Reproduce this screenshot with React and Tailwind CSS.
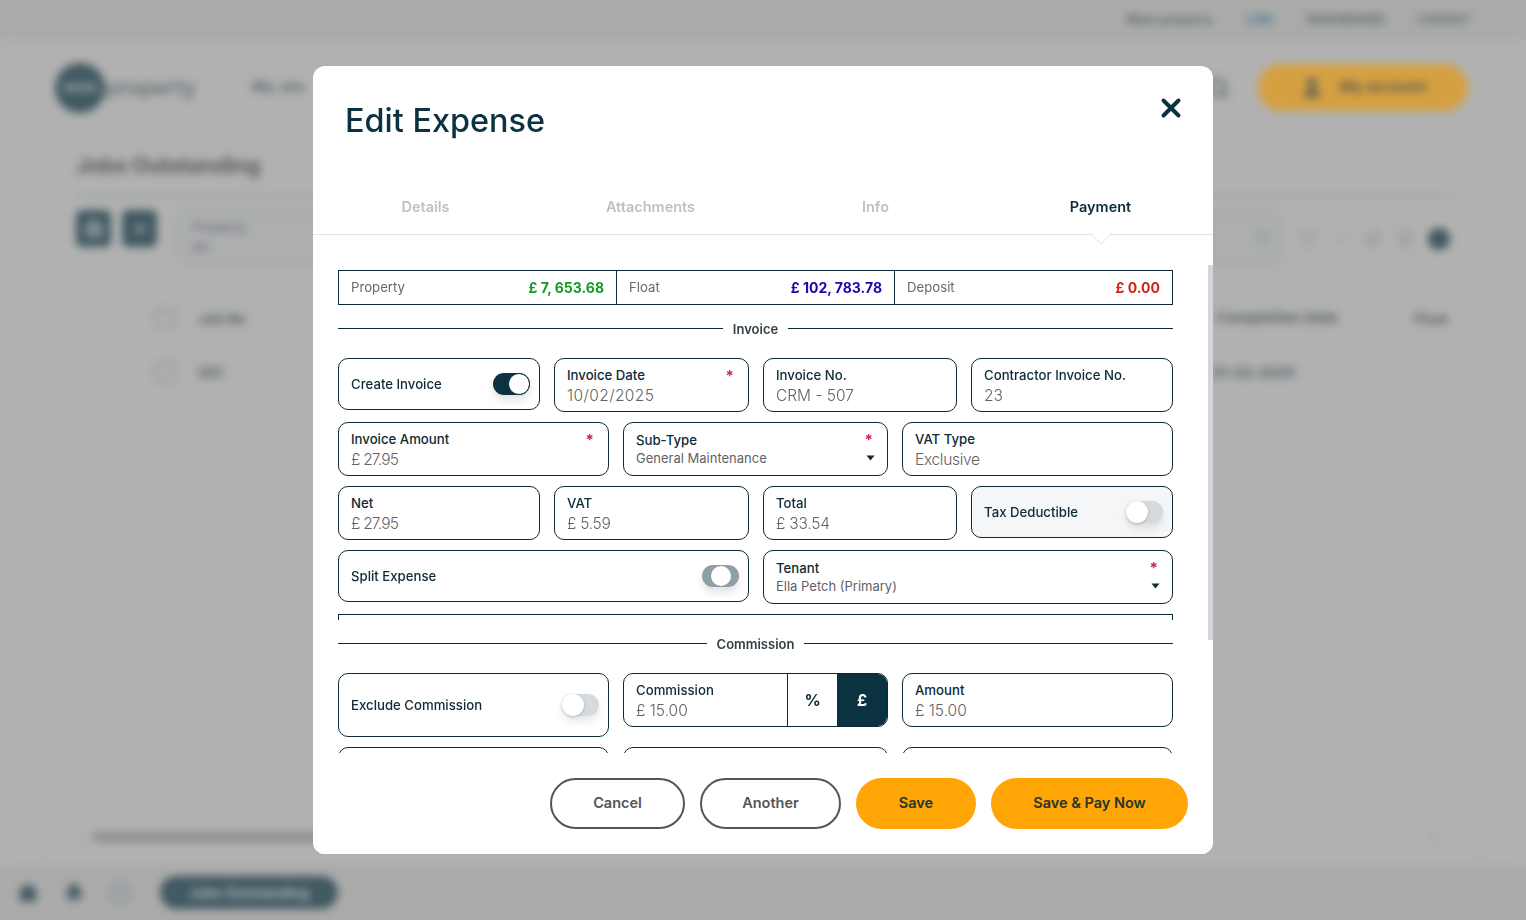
import React from "react";
import { X, Search, Printer, Plus, User, ChevronLeft, ChevronRight, Home, Bell, Settings, Filter, Trash2 } from "lucide-react";

const Toggle = ({ state }) => {
  if (state === "on")
    return (
      <span className="flex h-[22px] w-[37px] items-center justify-end rounded-full bg-[#0a3240] shadow-[0_5px_8px_rgba(0,0,0,0.12)]">
        <span className="h-[22px] w-[22px] rounded-full border border-[#0a3240] bg-white" />
      </span>
    );
  if (state === "mid")
    return (
      <span className="flex h-[22px] w-[37px] items-center justify-center rounded-full bg-[#8f9fa6] shadow-[0_5px_8px_rgba(0,0,0,0.12)]">
        <span className="h-[20px] w-[20px] rounded-full bg-white" />
      </span>
    );
  return (
    <span className="flex h-[22px] w-[37px] items-center justify-start rounded-full bg-[#d5dade] shadow-[0_5px_8px_rgba(0,0,0,0.1)]">
      <span className="h-[22px] w-[22px] rounded-full bg-white shadow-[0_1px_3px_rgba(0,0,0,0.2)]" />
    </span>
  );
};

const ToggleBox = ({ label, state, muted, h = "h-[52px]" }) => (
  <div className={`flex ${h} items-center justify-between rounded-[10px] border border-[#0d2b36] pl-[12px] pr-[9px] ${muted ? "bg-[#f5f6f8]" : "bg-white"}`}>
    <span className="pt-[2px] text-[13.2px] font-medium text-[#0d2b36]">{label}</span>
    <Toggle state={state} />
  </div>
);

const Caret = () => (
  <svg width="9" height="6" viewBox="0 0 9 6" className="block">
    <path d="M0.5 0.5H8.5L4.5 5.5Z" fill="#0d2b36" />
  </svg>
);

const Field = ({ label, value, req, select, track = "" }) => (
  <div className="relative flex h-[54px] flex-col rounded-[10px] border border-[#0d2b36] bg-white pl-[12px] pt-[7px]">
    <span className={`text-[13.2px] font-medium leading-[18px] text-[#0d2b36] ${select ? "mt-[1px]" : ""}`}>{label}</span>
    <span className={select ? "text-[13px] leading-[18px] text-[#5f6368]" : `mt-[2px] text-[15.5px] font-light leading-[20px] text-[#5f6368] ${track}`}>{value}</span>
    {req && <span className="absolute right-[14px] top-[9px] text-[15px] font-bold leading-[15px] text-[#d5264f]">*</span>}
    {select && (
      <span className="absolute right-[12px] top-[32px]">
        <Caret />
      </span>
    )}
  </div>
);

const Divider = ({ label }) => (
  <div className="flex h-[20px] items-center gap-[10px]">
    <span className="h-px flex-1 bg-[#0d2b36]" />
    <span className="pt-[3px] text-[13px] font-semibold text-[#333f45]">{label}</span>
    <span className="h-px flex-1 bg-[#0d2b36]" />
  </div>
);

const Balance = ({ label, value, color, last }) => (
  <div className={`flex items-center justify-between pl-[12px] pr-[12px] ${last ? "" : "border-r border-[#0d2b36]"}`}>
    <span className="text-[13.2px] text-[#666a6e]">{label}</span>
    <span className={`text-[14px] font-bold ${color}`}>{value}</span>
  </div>
);

const Background = () => (
  <div className="flex h-full flex-col bg-[#c3c3c3] text-[#333]">
    <div className="flex h-[40px] items-center justify-end gap-[32px] bg-[#b8b8b8] pr-[56px] text-[12.5px] font-bold text-[#3f5258]">
      <span>Main property</span>
      <span className="text-[#2f6f8c]">LINK</span>
      <span>DASHBOARD</span>
      <span>LOGOUT</span>
    </div>
    <div className="flex h-[95px] items-center pl-[55px] pr-[58px]">
      <div className="flex h-[50px] w-[50px] items-center justify-center rounded-full bg-[#0a3240] text-[12px] font-bold text-[#9fb2b8]">MAIN</div>
      <span className="text-[22px] font-medium text-[#3f5258]">property</span>
      <span className="ml-[56px] text-[15px] font-bold text-[#3f5258]">My Jes</span>
      <Search className="ml-auto mr-[28px] text-[#3f5258]" size={24} strokeWidth={3} />
      <div className="flex h-[47px] w-[210px] items-center justify-center gap-[16px] rounded-full bg-[#ffa70a] text-[#3a3a20]">
        <User size={24} fill="currentColor" />
        <span className="text-[15px] font-bold">My account</span>
      </div>
    </div>
    <div className="mx-[45px] flex flex-1 flex-col border-x border-[#bdbdbd] px-[30px]">
      <h2 className="mt-[14px] text-[22px] font-bold tracking-[-0.4px] text-[#3b3b3b]">Jobs Outstanding</h2>
      <div className="mt-[12px] h-[3px] w-[1375px] bg-[#a5adae]" />
      <div className="mt-[13px] flex items-start">
        <span className="flex h-[37px] w-[35px] items-center justify-center rounded-[6px] bg-[#0a3240] text-white"><Printer size={18} /></span>
        <span className="ml-[11px] flex h-[37px] w-[35px] items-center justify-center rounded-[6px] bg-[#0a3240] text-white"><Plus size={18} /></span>
        <div className="ml-[19px] flex h-[55px] w-[1106px] items-center justify-between rounded-[10px] border-2 border-[#aab0b1] bg-[#bcc0c0] pl-[14px] pr-[8px]">
          <div className="flex flex-col text-[13px] font-medium text-[#556]"><span>Property</span><span>All</span></div>
          <Search size={18} className="text-[#7f8a8c]" />
        </div>
        <div className="ml-[18px] mt-[18px] flex items-center gap-[14px] text-[#88949a]">
          <Filter size={18} />
          <ChevronRight size={18} />
          <Settings size={18} />
          <Trash2 size={18} />
          <span className="h-[22px] w-[22px] rounded-full bg-[#0a3240]" />
        </div>
      </div>
      <div className="mt-[38px] flex h-[30px] items-center text-[14px] font-bold text-[#33464c]">
        <span className="ml-[79px] h-[20px] w-[20px] rounded-[5px] border-2 border-[#8a8e90]" />
        <span className="ml-[23px]">Job No</span>
        <span className="ml-auto text-[15px]">Completion Date</span>
        <span className="ml-[76px] mr-[2px]">Float</span>
      </div>
      <div className="mt-[24px] flex h-[30px] items-center text-[14px] font-bold text-[#33464c]">
        <span className="ml-[79px] h-[20px] w-[20px] rounded-[5px] border-2 border-[#8a8e90]" />
        <span className="ml-[23px]">001</span>
        <span className="ml-auto mr-[155px]">01-02-2025</span>
      </div>
      <div className="mt-auto mb-[21px] flex items-center justify-between pr-[8px]">
        <div className="flex w-[900px] items-center">
          <ChevronLeft size={14} className="text-[#999]" />
          <span className="ml-[2px] h-[10px] flex-1 rounded-full bg-[#8a8a8a]" />
        </div>
        <ChevronRight size={14} className="text-[#888]" />
      </div>
    </div>
    <div className="flex h-[55px] items-center bg-[#b8b8b8] pl-[18px]">
      <Home size={20} fill="currentColor" className="text-[#0a3240]" />
      <Bell size={20} fill="currentColor" className="ml-[26px] text-[#0a3240]" />
      <span className="ml-[24px] h-[24px] w-[24px] rounded-full border-2 border-[#95a2a6] bg-[#a5adb0]" />
      <span className="ml-[28px] flex h-[33px] w-[178px] items-center justify-center rounded-full bg-[#0a3240] text-[14px] font-semibold text-[#c9d3d6]">Jobs Outstanding</span>
    </div>
  </div>
);

const Modal = () => (
  <div className="flex h-[788px] w-[900px] flex-col overflow-hidden rounded-[12px] bg-white">
    <div className="relative h-[169px] shrink-0 border-b border-[#e3e4e6]">
      <h1 className="pl-[32px] pt-[31px] text-[32.4px] font-medium leading-[48px] text-[#0a3240]">Edit Expense</h1>
      <button className="absolute right-[27px] top-[27px] text-[#0a3240]">
        <X size={30} strokeWidth={3.2} />
      </button>
      <div className="absolute inset-x-0 bottom-[15px] grid grid-cols-4 text-center text-[14.5px] font-semibold leading-[24px] text-[#c0c0c0]">
        <span>Details</span>
        <span>Attachments</span>
        <span>Info</span>
        <span className="text-[#0d2b36]">Payment</span>
      </div>
      <svg width="24" height="12" viewBox="0 0 24 12" className="absolute -bottom-[11px] left-[776px]">
        <path d="M1 0L12 11L23 0" fill="#fff" stroke="#e3e4e6" />
      </svg>
    </div>
    <div className="relative h-[518px] shrink-0 overflow-hidden pl-[25px] pr-[40px] pt-[35px]">
      <span className="absolute right-0 top-[30px] h-[375px] w-[5px] bg-[#d2d5db]" />
      <div className="grid h-[35px] grid-cols-[278px_278px_1fr] border border-[#0d2b36]">
        <Balance label="Property" value="£ 7, 653.68" color="text-[#159a22]" />
        <Balance label="Float" value="£ 102, 783.78" color="text-[#2400b0]" />
        <Balance label="Deposit" value="£ 0.00" color="text-[#d3221c]" last />
      </div>
      <div className="mt-[13px]"><Divider label="Invoice" /></div>
      <div className="mt-[20px] grid grid-cols-[202px_195px_194px_202px] items-start gap-x-[14px]">
        <ToggleBox label="Create Invoice" state="on" />
        <Field label="Invoice Date" value="10/02/2025" req track="tracking-[0.4px]" />
        <Field label="Invoice No." value="CRM - 507" />
        <Field label="Contractor Invoice No." value="23" />
      </div>
      <div className="mt-[10px] grid grid-cols-[271px_265px_271px] items-start gap-x-[14px]">
        <Field label="Invoice Amount" value="£ 27.95" req track="tracking-[-0.8px]" />
        <Field label="Sub-Type" value="General Maintenance" req select />
        <Field label="VAT Type" value="Exclusive" track="tracking-[-0.3px]" />
      </div>
      <div className="mt-[10px] grid grid-cols-[202px_195px_194px_202px] items-start gap-x-[14px]">
        <Field label="Net" value="£ 27.95" track="tracking-[-0.8px]" />
        <Field label="VAT" value="£ 5.59" track="tracking-[-0.3px]" />
        <Field label="Total" value="£ 33.54" track="tracking-[-0.2px]" />
        <ToggleBox label="Tax Deductible" state="off" muted />
      </div>
      <div className="mt-[10px] grid grid-cols-[411px_410px] items-start gap-x-[14px]">
        <ToggleBox label="Split Expense" state="mid" />
        <Field label="Tenant" value="Ella Petch (Primary)" req select />
      </div>
      <div className="mt-[10px] h-[6px] border-x border-t border-[#0d2b36]" />
      <div className="mt-[13px]"><Divider label="Commission" /></div>
      <div className="mt-[20px] grid grid-cols-[271px_265px_271px] items-start gap-x-[14px]">
        <ToggleBox label="Exclude Commission" state="off" h="h-[64px]" />
        <div className="flex h-[54px] overflow-hidden rounded-[10px] border border-[#0d2b36]">
          <div className="flex flex-1 flex-col pl-[12px] pt-[7px]">
            <span className="text-[13.2px] font-medium leading-[18px] text-[#0d2b36]">Commission</span>
            <span className="mt-[2px] text-[15.5px] font-light leading-[20px] text-[#5f6368]">£ 15.00</span>
          </div>
          <span className="flex w-[50px] items-center justify-center border-l border-[#0d2b36] text-[16px] font-bold text-[#0d2b36]">%</span>
          <span className="flex w-[50px] items-center justify-center bg-[#0a3240] text-[16px] font-bold text-white">£</span>
        </div>
        <Field label="Amount" value="£ 15.00" />
      </div>
      <div className="mt-[10px] grid grid-cols-[271px_265px_271px] gap-x-[14px]">
        <div className="h-[54px] rounded-[10px] border border-[#0d2b36]" />
        <div className="h-[54px] rounded-[10px] border border-[#0d2b36]" />
        <div className="h-[54px] rounded-[10px] border border-[#0d2b36]" />
      </div>
    </div>
    <div className="flex flex-1 items-start justify-end gap-[15px] bg-white pr-[25px] pt-[25px] text-[14.5px] font-semibold">
      <button className="h-[51px] w-[135px] rounded-full border-2 border-[#555] pb-[2px] text-[#555]">Cancel</button>
      <button className="h-[51px] w-[141px] rounded-full border-2 border-[#555] pb-[2px] text-[#555]">Another</button>
      <button className="h-[51px] w-[120px] rounded-full bg-[#ffa505] pb-[2px] text-[#23362e]">Save</button>
      <button className="h-[51px] w-[197px] rounded-full bg-[#ffa505] pb-[2px] text-[#23362e]">Save &amp; Pay Now</button>
    </div>
  </div>
);

export default function App() {
  return (
    <div className="relative h-[920px] w-[1526px] overflow-hidden font-['Inter',sans-serif]">
      <Background />
      <div className="absolute inset-0 flex items-center justify-center bg-[#969696]/40 backdrop-blur-[4px]">
        <Modal />
      </div>
    </div>
  );
}
